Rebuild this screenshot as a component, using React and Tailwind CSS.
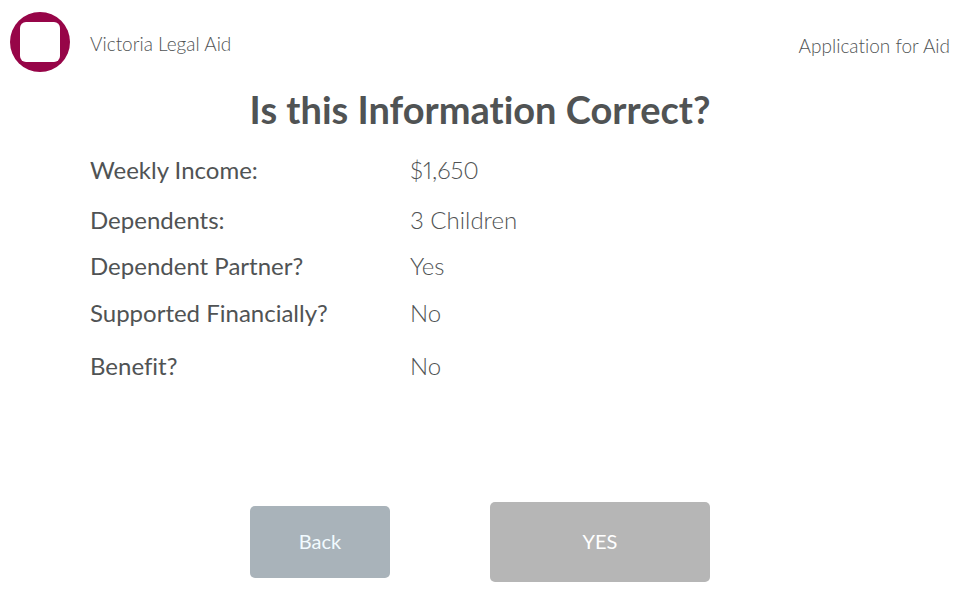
const rows = [
  { label: 'Weekly Income:', value: '$1,650', space: 'mt-0' },
  { label: 'Dependents:', value: '3 Children', space: 'mt-[18px]' },
  { label: 'Dependent Partner?', value: 'Yes', space: 'mt-[14px]' },
  { label: 'Supported Financially?', value: 'No', space: 'mt-[15px]' },
  { label: 'Benefit?', value: 'No', space: 'mt-[21px]' },
];

export default function App() {
  return (
    <div className="flex min-h-screen flex-col bg-white font-['Lato',sans-serif] text-[#505354] [font-variant-ligatures:none]">
      <header className="flex items-center justify-between px-[10px] pt-3 text-[19px] leading-6 font-light">
        <div className="flex items-center gap-5">
          <svg className="size-[60px]" viewBox="0 0 60 60" aria-hidden="true">
            <circle cx="30" cy="30" r="30" fill="#970548" />
            <rect x="10" y="10" width="40" height="40" rx="6" fill="#fff" />
          </svg>
          <span className="pt-1">Victoria Legal Aid</span>
        </div>
        <span className="pt-2">Application for Aid</span>
      </header>
      <main className="flex grow flex-col">
        <h1 className="mt-[14px] text-center text-[38px] leading-[46px] font-bold">Is this Information Correct?</h1>
        <dl className="mt-[22px] px-[90px] text-2xl proportional-nums">
          {rows.map((row) => (
            <div key={row.label} className={`flex items-center ${row.space}`}>
              <dt className="w-80">{row.label}</dt>
              <dd className="font-light">{row.value}</dd>
            </div>
          ))}
        </dl>
        <div className="mt-auto mb-[18px] flex items-center justify-center gap-[100px] text-xl text-white">
          <button type="button" className="h-[72px] w-[140px] rounded-[5px] bg-[#a9b3ba] pb-0.5 text-[#f2fbff]">Back</button>
          <button type="button" className="h-20 w-[220px] rounded-[5px] bg-[#b6b6b6] pb-0.5">YES</button>
        </div>
      </main>
    </div>
  );
}
